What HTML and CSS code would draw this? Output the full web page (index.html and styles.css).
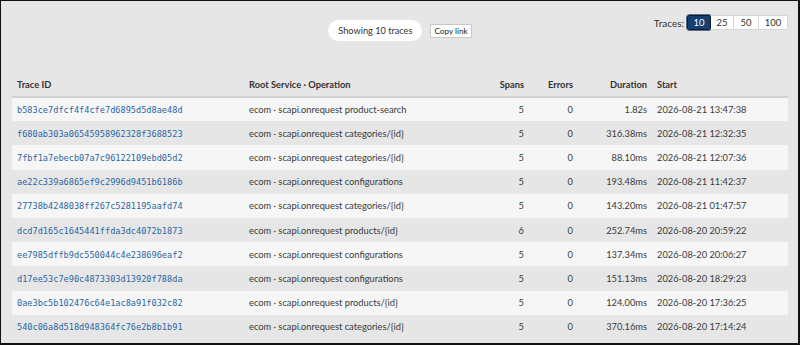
FILE: index.html
```html
<!DOCTYPE html>
<html>
<head>
<meta charset="utf-8">
<link rel="stylesheet" href="styles.css">
</head>
<body>
<div class="frame">
  <div class="toolbar">
    <div class="spacer"></div>
    <div class="summary">
      <span class="pill">Showing 10 traces</span>
      <button class="copy">Copy link</button>
    </div>
    <div class="limit">
      <span class="limit-label">Traces:</span>
      <div class="seg">
        <button class="seg-btn active">10</button>
        <button class="seg-btn">25</button>
        <button class="seg-btn">50</button>
        <button class="seg-btn">100</button>
      </div>
    </div>
  </div>
  <table class="traces">
    <colgroup>
      <col class="c-id"><col class="c-op"><col class="c-spans"><col class="c-err"><col class="c-dur"><col class="c-start">
    </colgroup>
    <thead>
      <tr>
        <th>Trace ID</th>
        <th>Root Service · Operation</th>
        <th class="num">Spans</th>
        <th class="num">Errors</th>
        <th class="num">Duration</th>
        <th>Start</th>
      </tr>
    </thead>
    <tbody>
      <tr><td class="id"><a href="#">b583ce7dfcf4f4cfe7d6895d5d8ae48d</a></td><td>ecom · scapi.onrequest product-search</td><td class="num">5</td><td class="num">0</td><td class="num">1.82s</td><td>2026-08-21 13:47:38</td></tr>
      <tr><td class="id"><a href="#">f680ab303a06545958962328f3688523</a></td><td>ecom · scapi.onrequest categories/{id}</td><td class="num">5</td><td class="num">0</td><td class="num">316.38ms</td><td>2026-08-21 12:32:35</td></tr>
      <tr><td class="id"><a href="#">7fbf1a7ebecb07a7c96122109ebd05d2</a></td><td>ecom · scapi.onrequest categories/{id}</td><td class="num">5</td><td class="num">0</td><td class="num">88.10ms</td><td>2026-08-21 12:07:36</td></tr>
      <tr><td class="id"><a href="#">ae22c339a6865ef9c2996d9451b6186b</a></td><td>ecom · scapi.onrequest configurations</td><td class="num">5</td><td class="num">0</td><td class="num">193.48ms</td><td>2026-08-21 11:42:37</td></tr>
      <tr><td class="id"><a href="#">27738b4248038ff267c5281195aafd74</a></td><td>ecom · scapi.onrequest categories/{id}</td><td class="num">5</td><td class="num">0</td><td class="num">143.20ms</td><td>2026-08-21 01:47:57</td></tr>
      <tr><td class="id"><a href="#">dcd7d165c1645441ffda3dc4072b1873</a></td><td>ecom · scapi.onrequest products/{id}</td><td class="num">6</td><td class="num">0</td><td class="num">252.74ms</td><td>2026-08-20 20:59:22</td></tr>
      <tr><td class="id"><a href="#">ee7985dffb9dc550044c4e238696eaf2</a></td><td>ecom · scapi.onrequest configurations</td><td class="num">5</td><td class="num">0</td><td class="num">137.34ms</td><td>2026-08-20 20:06:27</td></tr>
      <tr><td class="id"><a href="#">d17ee53c7e90c4873303d13920f788da</a></td><td>ecom · scapi.onrequest configurations</td><td class="num">5</td><td class="num">0</td><td class="num">151.13ms</td><td>2026-08-20 18:29:23</td></tr>
      <tr><td class="id"><a href="#">0ae3bc5b102476c64e1ac8a91f032c82</a></td><td>ecom · scapi.onrequest products/{id}</td><td class="num">5</td><td class="num">0</td><td class="num">124.00ms</td><td>2026-08-20 17:36:25</td></tr>
      <tr><td class="id"><a href="#">540c06a8d518d948364fc76e2b8b1b91</a></td><td>ecom · scapi.onrequest categories/{id}</td><td class="num">5</td><td class="num">0</td><td class="num">370.16ms</td><td>2026-08-20 17:14:24</td></tr>
    </tbody>
  </table>
</div>
</body>
</html>
```
FILE: styles.css
```css
* { box-sizing: border-box; }
html, body { margin: 0; padding: 0; }
body {
  font-family: Lato, "Open Sans", "Liberation Sans", sans-serif;
  color: #333;
}
.frame {
  width: 800px;
  height: 345px;
  overflow: hidden;
  background: #e6e6e6;
  border: 1px solid #111;
  border-right-width: 2px;
  border-bottom-width: 2px;
  padding: 0 10px 0 11px;
}
.toolbar {
  display: grid;
  grid-template-columns: 1fr auto 1fr;
  align-items: start;
  height: 72px;
  padding-top: 13px;
}
.summary {
  display: flex;
  align-items: center;
  gap: 8px;
  margin-top: 6px;
}
.pill {
  display: inline-flex;
  align-items: center;
  height: 21px;
  padding: 0 10px;
  background: #fff;
  border-radius: 11px;
  font-size: 9.2px;
  color: #333;
}
.copy {
  font-family: inherit;
  font-size: 8.2px;
  color: #222;
  height: 14px;
  padding: 0 3px;
  background: #fff;
  border: 1px solid #c8c8c8;
  border-radius: 1px;
  line-height: 12px;
}
.limit {
  justify-self: end;
  display: flex;
  align-items: center;
  gap: 3px;
  margin-top: 1px;
}
.limit-label { font-size: 10px; color: #333; }
.seg { display: flex; }
.seg-btn {
  font-family: inherit;
  font-size: 9.5px;
  color: #333;
  background: #fff;
  border: 1px solid #d6d6d6;
  border-left-width: 0;
  height: 15px;
  padding: 0;
  line-height: 13px;
  width: 24px;
}
.seg-btn:nth-child(2) { width: 23px; }
.seg-btn:nth-child(3) { width: 25px; }
.seg-btn:nth-child(4) { width: 29px; border-radius: 0 2px 2px 0; }
.seg-btn.active {
  background: #163e6e;
  color: #fff;
  border: 1px solid #0b1c33;
  outline: 1px solid #5a6f8a;
  border-radius: 2px;
}
.traces {
  width: 776px;
  border-collapse: collapse;
  table-layout: fixed;
  font-size: 9.3px;
}
.c-id { width: 232px; }
.c-op { width: 226px; }
.c-spans { width: 59px; }
.c-err { width: 49px; }
.c-dur { width: 74px; }
.c-start { width: 136px; }
th, td {
  padding: 0 5px;
  text-align: left;
  white-space: nowrap;
}
th {
  height: 24px;
  font-weight: 700;
  color: #333;
  border-bottom: 2px solid #d2d2d2;
}
td { height: 24.2px; color: #3a3a3a; }
tbody tr:nth-child(odd) { background: #f6f6f6; }
.num { text-align: right; }
.id a {
  font-family: "DejaVu Sans Mono", monospace;
  font-size: 8.6px;
  color: #2b67a3;
  text-decoration: none;
}
```
